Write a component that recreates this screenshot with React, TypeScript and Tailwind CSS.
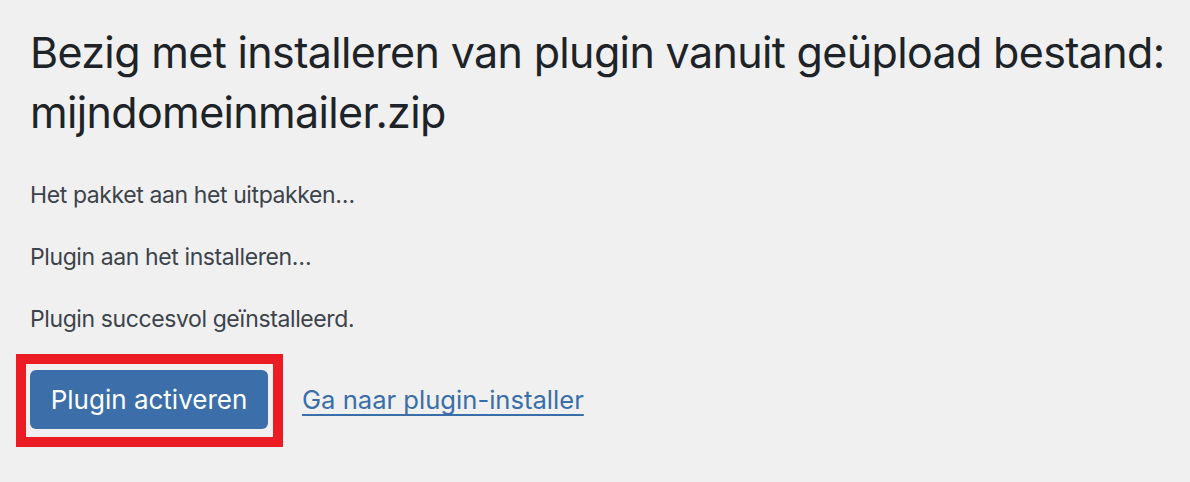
const App = () => {
  const steps = [
    "Het pakket aan het uitpakken…",
    "Plugin aan het installeren…",
    "Plugin succesvol geïnstalleerd.",
  ];

  return (
    <div className="min-h-[482px] w-[1190px] bg-[#f0f0f1] pl-[30px] pt-[22px] font-['Inter',sans-serif]">
      <h1 className="text-[43px] leading-[60px] font-normal text-[#1d2327] tracking-[-0.65px] whitespace-nowrap">
        Bezig met installeren van plugin vanuit geüpload bestand:
        <br />
        mijndomeinmailer.zip
      </h1>
      <div className="mt-[35px] flex flex-col gap-[26px]">
        {steps.map((step) => (
          <p key={step} className="text-[23px] leading-[36px] tracking-[-0.4px] text-[#3c434a]">
            {step}
          </p>
        ))}
      </div>
      <div className="mt-[17px] flex items-center">
        <div className="-ml-[14px] border-[10px] border-[#ec1c24] bg-[#f0f0f1] pt-[6px] pb-[8px] pl-[4px] pr-[5px]">
          <button className="block h-[59px] w-[238px] rounded-[6px] bg-[#3c6fa9] text-[26px] text-white">
            Plugin activeren
          </button>
        </div>
        <a
          href="#"
          className="ml-[19px] text-[25.6px] text-[#3a6ea8] underline underline-offset-[5px] decoration-[2px]"
        >
          Ga naar plugin-installer
        </a>
      </div>
    </div>
  );
};

export default App;
